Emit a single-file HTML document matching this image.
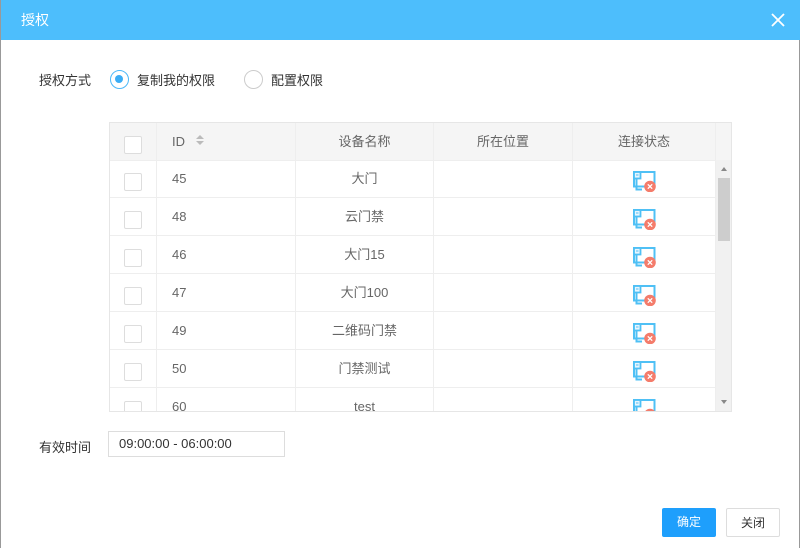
<!DOCTYPE html>
<html><head><meta charset="utf-8"><style>
*{margin:0;padding:0;box-sizing:border-box}
body{width:800px;height:548px;background:#fff;font-family:"Liberation Sans","Noto Sans CJK SC",sans-serif;font-size:13px;color:#333;position:relative;overflow:hidden;border-left:1px solid #999;border-right:1px solid #999}
.hd{position:absolute;left:0;top:0;width:800px;height:40px;background:#4dbefc;color:#fff;font-size:14px;line-height:40px;padding-left:20px}
.x{position:absolute;right:16px;top:13px;width:14px;height:14px}
.lbl{position:absolute;font-size:13px;color:#333}
.radio{position:absolute;width:19px;height:19px;border-radius:50%;border:1.5px solid #ccc}
.radio.on{border-color:#4db8f8}
.radio.on:after{content:"";position:absolute;left:4px;top:4px;width:8px;height:8px;border-radius:50%;background:#3badf5}
.tbl{position:absolute;left:108px;top:122px;width:623px;height:290px;border:1px solid #e6e6e6;overflow:hidden}
.row{position:absolute;left:0;width:606px;height:38px;border-bottom:1px solid #eee;color:#666}
.row div{position:absolute;top:0;height:38px;line-height:38px;border-right:1px solid #eee}
.th{background:#f5f5f5;color:#666;width:622px}
.cb{position:absolute;left:14px;top:13px;width:18px;height:18px;border:1px solid #ddd;background:#fff;border-radius:2px}
.c0{left:0;width:47px}.c1{left:47px;width:139px;padding-left:15px}.c2{left:186px;width:138px;text-align:center}.c3{left:324px;width:139px;text-align:center}.c4{left:463px;width:143px;text-align:center}
.c4 svg{position:absolute;left:59px;top:10px}
.sb{position:absolute;left:606px;width:16px;background:#f1f1f1}
.btn{position:absolute;top:508px;height:29px;width:54px;line-height:29px;text-align:center;font-size:12px}
</style></head><body>
<div class="hd">授权<svg class="x" viewBox="0 0 14 14"><path d="M1 1L13 13M13 1L1 13" stroke="#fff" stroke-width="1.8"/></svg></div>
<div class="lbl" style="left:38px;top:70px">授权方式</div>
<div class="radio on" style="left:109px;top:70px"></div>
<div class="lbl" style="left:136px;top:70px">复制我的权限</div>
<div class="radio" style="left:243px;top:70px"></div>
<div class="lbl" style="left:270px;top:70px">配置权限</div>
<div class="tbl">
<div class="row th" style="top:0"><div class="c0"><span class="cb"></span></div><div class="c1">ID</div><div class="c2">设备名称</div><div class="c3">所在位置</div><div class="c4" style="text-align:center">连接状态</div><div style="left:606px;width:16px;border:none"></div></div>
<div style="position:absolute;left:86px;top:11px;width:8px;height:12px"><svg width="8" height="12"><path d="M0 5L4 1L8 5Z M0 7L4 11L8 7Z" fill="#bbb"/></svg></div>
<div class="row" style="top:37px"><div class="c0"><span class="cb"></span></div><div class="c1">45</div><div class="c2">大门</div><div class="c3"></div><div class="c4">ICON</div></div>
<div class="row" style="top:75px"><div class="c0"><span class="cb"></span></div><div class="c1">48</div><div class="c2">云门禁</div><div class="c3"></div><div class="c4">ICON</div></div>
<div class="row" style="top:113px"><div class="c0"><span class="cb"></span></div><div class="c1">46</div><div class="c2">大门15</div><div class="c3"></div><div class="c4">ICON</div></div>
<div class="row" style="top:151px"><div class="c0"><span class="cb"></span></div><div class="c1">47</div><div class="c2">大门100</div><div class="c3"></div><div class="c4">ICON</div></div>
<div class="row" style="top:189px"><div class="c0"><span class="cb"></span></div><div class="c1">49</div><div class="c2">二维码门禁</div><div class="c3"></div><div class="c4">ICON</div></div>
<div class="row" style="top:227px"><div class="c0"><span class="cb"></span></div><div class="c1">50</div><div class="c2">门禁测试</div><div class="c3"></div><div class="c4">ICON</div></div>
<div class="row" style="top:265px"><div class="c0"><span class="cb"></span></div><div class="c1">60</div><div class="c2">test</div><div class="c3"></div><div class="c4">ICON</div></div>
<div class="sb" style="top:37px;height:253px"><svg width="16" height="253"><path d="M5 11L8 7L11 11Z M5 240L8 244L11 240Z" fill="#888"/><rect x="2" y="18" width="12" height="63" fill="#cdcdcd"/></svg></div>
</div>
<div class="lbl" style="left:38px;top:437px">有效时间</div>
<div style="position:absolute;left:107px;top:431px;width:177px;height:26px;border:1px solid #ddd;line-height:24px;padding-left:10px;font-size:13px;color:#333">09:00:00 - 06:00:00</div>
<div class="btn" style="left:661px;background:#1e9ffc;color:#fff;border-radius:2px">确定</div>
<div class="btn" style="left:725px;border:1px solid #ddd;color:#333;border-radius:2px">关闭</div>
<script>
var ic='<svg width="25" height="22" viewBox="0 0 25 22"><rect x="2" y="2" width="20.5" height="14.5" fill="none" stroke="#4fc0f5" stroke-width="2"/><rect x="2" y="2" width="6.5" height="6.5" fill="#e8f6fe" stroke="#4fc0f5" stroke-width="1.8"/><path d="M4 5H6.5" stroke="#4fc0f5" stroke-width="1"/><path d="M4.5 8.5V19.5H10" stroke="#4fc0f5" stroke-width="2" fill="none"/><circle cx="18" cy="16.5" r="5.8" fill="#f47c6b"/><path d="M15.8 14.3L20.2 18.7M20.2 14.3L15.8 18.7" stroke="#fff" stroke-width="1.3"/></svg>';
document.querySelectorAll('.c4').forEach(function(e){if(e.textContent=='ICON')e.innerHTML=ic;});
</script>
</body></html>
